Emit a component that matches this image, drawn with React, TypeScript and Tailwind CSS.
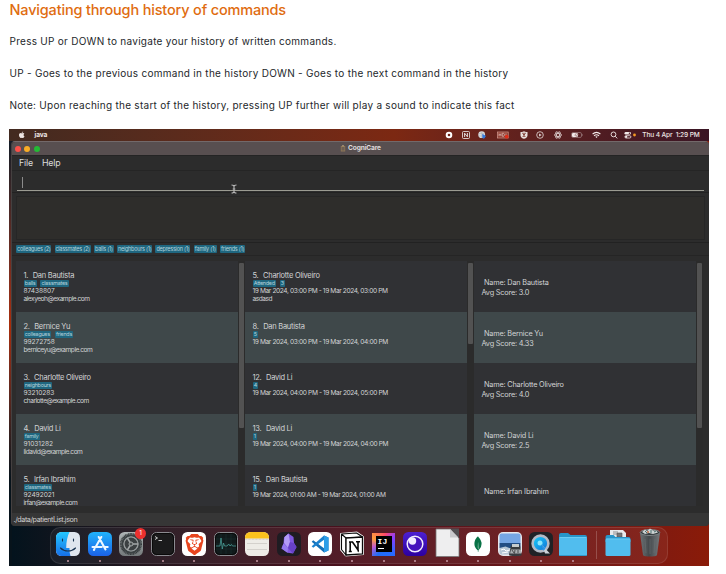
import React from "react";
import { SiBrave, SiMongodb } from "react-icons/si";
import { FaApple } from "react-icons/fa";

type Person = { no: string; name: string; tags: string[]; lines: string[] };
type Score = { name: string; score?: string };

const tagCounts = [
  { label: "colleagues (2)", w: "w-[35px]" },
  { label: "classmates (2)", w: "w-[36px]" },
  { label: "balls (1)", w: "w-[20px]" },
  { label: "neighbours (1)", w: "w-[35px]" },
  { label: "depression (1)", w: "w-[35px]" },
  { label: "family (1)", w: "w-[23px]" },
  { label: "friends (1)", w: "w-[25px]" },
];

const patients: Person[] = [
  { no: "1.", name: "Dan Bautista", tags: ["balls", "classmates"], lines: ["87438807", "alexyeoh@example.com"] },
  { no: "2.", name: "Bernice Yu", tags: ["colleagues", "friends"], lines: ["99272758", "berniceyu@example.com"] },
  { no: "3.", name: "Charlotte Oliveiro", tags: ["neighbours"], lines: ["93210283", "charlotte@example.com"] },
  { no: "4.", name: "David Li", tags: ["family"], lines: ["91031282", "lidavid@example.com"] },
  { no: "5.", name: "Irfan Ibrahim", tags: ["classmates"], lines: ["92492021", "irfan@example.com"] },
];

const appointments: Person[] = [
  { no: "5.", name: "Charlotte Oliveiro", tags: ["Attended", "3"], lines: ["19 Mar 2024, 03:00 PM - 19 Mar 2024, 03:00 PM", "asdasd"] },
  { no: "8.", name: "Dan Bautista", tags: ["5"], lines: ["19 Mar 2024, 03:00 PM - 19 Mar 2024, 04:00 PM"] },
  { no: "12.", name: "David Li", tags: ["4"], lines: ["19 Mar 2024, 04:00 PM - 19 Mar 2024, 05:00 PM"] },
  { no: "13.", name: "David Li", tags: ["1"], lines: ["19 Mar 2024, 04:00 PM - 19 Mar 2024, 04:00 PM"] },
  { no: "15.", name: "Dan Bautista", tags: ["1"], lines: ["19 Mar 2024, 01:00 AM - 19 Mar 2024, 01:00 AM"] },
];

const scores: Score[] = [
  { name: "Dan Bautista", score: "3.0" },
  { name: "Bernice Yu", score: "4.33" },
  { name: "Charlotte Oliveiro", score: "4.0" },
  { name: "David Li", score: "2.5" },
  { name: "Irfan Ibrahim" },
];

const rowBg = (i: number) => (i % 2 ? "bg-[#3f484a]" : "bg-[#303134]");

const lineTracking = (line: string) => {
  if (/^\d+$/.test(line)) return "tracking-[-0.05px]";
  if (line.includes(":")) return "tracking-[-0.39px]";
  return "tracking-[-0.49px]";
};

function PersonList({ items }: { items: Person[] }) {
  return (
    <div className="h-[245px] w-[222px] shrink-0 overflow-hidden">
      {items.map((p, i) => (
        <div key={i} className={`h-[51px] pt-[9px] pl-[7.5px] text-[#d2d4d5] ${rowBg(i)}`}>
          <div className="flex h-[9.5px] gap-[4.5px] text-[7.5px] leading-[11px] tracking-[-0.26px]">
            <span>{p.no}</span>
            <span>{p.name}</span>
          </div>
          <div className="flex h-[9.3px] gap-[3.5px]">
            {p.tags.map((t) => (
              <span key={t} className="h-[7.5px] rounded-[1px] bg-[#1f6780] px-[1.3px] text-[5.4px] leading-[7.5px] tracking-[-0.26px] text-[#b4d3dc]">
                {t}
              </span>
            ))}
          </div>
          {p.lines.map((l) => (
            <div key={l} className={`mb-[3.2px] h-[5px] text-[6.6px] leading-[5px] whitespace-nowrap ${lineTracking(l)}`}>{l}</div>
          ))}
        </div>
      ))}
    </div>
  );
}

function ScoreList() {
  return (
    <div className="h-[245px] w-[222px] shrink-0 overflow-hidden">
      {scores.map((s, i) => (
        <div key={i} className={`flex h-[51px] flex-col justify-center pt-[2px] pl-[7.5px] text-[7.3px] leading-[9.8px] tracking-[-0.18px] text-[#d2d4d5] ${rowBg(i)}`}>
          <div className="pl-[2.5px]">Name: {s.name}</div>
          {s.score && <div>Avg Score: {s.score}</div>}
        </div>
      ))}
    </div>
  );
}

function Scroll({ thumb }: { thumb: string }) {
  return (
    <div className="h-[245px] w-[7px] shrink-0 bg-[#2b2b2b] pt-[2px] pl-[1px]">
      <div className={`w-[5px] rounded-[1px] bg-[#525252] ${thumb}`} />
    </div>
  );
}

function MenuBar() {
  return (
    <div className="flex h-[12px] items-center bg-linear-to-r from-[#422a20] via-[#7c2812] via-55% to-[#3a1524] pl-[9px] font-medium text-[#eee6e4]">
      <FaApple className="h-[7.5px] w-[7.5px]" />
      <span className="ml-[9px] w-[410px] text-[6.6px] leading-[12px] font-bold tracking-[-0.1px]">java</span>
      <svg className="h-[8px] w-[8px]" viewBox="0 0 8 8"><circle cx="4" cy="4" r="2.3" fill="none" stroke="#fff" strokeWidth="2" /></svg>
      <svg className="ml-[9px] h-[8px] w-[8px]" viewBox="0 0 8 8">
        <rect x=".5" y=".5" width="7" height="7" rx="1" fill="none" stroke="#eee" strokeWidth=".8" />
        <path d="M2.6 6V2.2L5.4 5.8V2" fill="none" stroke="#eee" strokeWidth=".9" />
      </svg>
      <svg className="ml-[8.5px] h-[8px] w-[8px]" viewBox="0 0 8 8">
        <circle cx="3.7" cy="3.7" r="3.4" fill="#d8dadd" /><path d="M3.7.3v6.8M.8 2.4h5.8M.8 5h4" stroke="#aaa" strokeWidth=".5" />
        <path d="M4.3 2.7L8 5 6 7.7 4.3 7z" fill="#3478dc" />
      </svg>
      <svg className="ml-[10.5px] h-[8px] w-[12px]" viewBox="0 0 12 8">
        <rect x=".4" y="1" width="10.8" height="6" fill="#8c382d" stroke="#d39b90" strokeWidth=".7" />
        <path d="M2 2.3v3M4 2.3v3M2 3.8h2M5.3 2.3v3h1.5l.7-1.5-.7-1.5zM9 2.3v3" fill="none" stroke="#e5c4bd" strokeWidth=".7" />
        <circle cx="9.7" cy="5.7" r="1.9" fill="#df2c18" />
      </svg>
      <svg className="ml-[11px] h-[8px] w-[8px]" viewBox="0 0 8 8">
        <path d="M.5 1C3 1 3 .2 4 .2S5 1 7.5 1v3.5C7.5 6.2 5.5 7.6 4 7.8 2.5 7.6.5 6.2.5 4.5z" fill="#e8dedc" />
        <path d="M2 2.3h4M2.5 5.5h3" stroke="#7b3429" strokeWidth=".7" /><circle cx="4" cy="3.8" r="1" fill="#7b3429" />
      </svg>
      <svg className="ml-[8.5px] h-[8px] w-[8px]" viewBox="0 0 8 8"><circle cx="4" cy="4" r="3.3" fill="none" stroke="#e8dedc" strokeWidth=".8" /><path d="M3.1 2.5v3l2.5-1.5z" fill="#e8dedc" /></svg>
      <svg className="ml-[9.5px] h-[8px] w-[8px]" viewBox="0 0 8 8" fill="none" stroke="#e8dedc" strokeWidth=".7">
        <ellipse cx="4" cy="4" rx="3.7" ry="1.5" /><ellipse cx="4" cy="4" rx="3.7" ry="1.5" transform="rotate(60 4 4)" /><ellipse cx="4" cy="4" rx="3.7" ry="1.5" transform="rotate(120 4 4)" />
      </svg>
      <svg className="ml-[9.5px] h-[8px] w-[12px]" viewBox="0 0 12 8">
        <rect x=".5" y="1.5" width="10" height="5" rx="1.5" fill="none" stroke="#a98f90" strokeWidth=".6" /><rect x="1" y="2" width="6" height="4" rx="1" fill="#f1e8e8" />
        <path d="M6.3.8L3.8 4.3h1.7L4.9 7.3l2.7-3.7H6z" fill="#fff" stroke="#632022" strokeWidth=".4" /><path d="M11.2 3.2v1.6" stroke="#a98f90" strokeWidth=".7" />
      </svg>
      <svg className="ml-[9px] h-[8px] w-[9px]" viewBox="0 0 9 8" fill="none" stroke="#f3eaea" strokeWidth="1.1">
        <path d="M.6 3Q4.5-.3 8.4 3M2 4.7q2.5-2 5 0" /><path d="M3.3 5.7Q4.5 4.8 5.7 5.7L4.5 7z" fill="#f3eaea" stroke="none" />
      </svg>
      <svg className="ml-[8.5px] h-[8px] w-[8px]" viewBox="0 0 8 8" fill="none" stroke="#f3eaea" strokeWidth=".9"><circle cx="3.5" cy="3.4" r="2.4" /><path d="M5.2 5.2L7.2 7.4" /></svg>
      <svg className="ml-[6px] h-[8px] w-[12px]" viewBox="0 0 12 8">
        <rect x=".5" y="1" width="6.5" height="2.6" rx="1.3" fill="#f3eaea" /><circle cx="5.5" cy="2.3" r=".8" fill="#532028" />
        <rect x=".9" y="4.7" width="6" height="2.3" rx="1.15" fill="none" stroke="#f3eaea" strokeWidth=".8" /><circle cx="2.2" cy="5.8" r="1.1" fill="#f3eaea" />
        <circle cx="10.5" cy="4" r="1.4" fill="#f59a24" />
      </svg>
      <span className="ml-[6.8px] text-[6.6px] leading-[12px] tracking-[-0.14px] whitespace-pre">Thu 4 Apr  1:29 PM</span>
    </div>
  );
}

function CareWindow() {
  return (
    <div className="flex h-[385px] flex-col overflow-hidden rounded-[4px] border-t border-l border-t-[#73696a] border-l-[#454040] bg-[#2c2c2c]">
      <div className="flex h-[13px] items-center bg-[#584f50] pl-[2.5px]">
        <div className="flex w-[325px] gap-[3.7px]">
          <span className="h-[6px] w-[6px] rounded-full bg-[#fc5049]" />
          <span className="h-[6px] w-[6px] rounded-full bg-[#f9ad26]" />
          <span className="h-[6px] w-[6px] rounded-full bg-[#24ba35]" />
        </div>
        <svg className="h-[7px] w-[6px]" viewBox="0 0 6 7"><rect x=".8" y="1" width="4.4" height="5.5" fill="#8d7656" /><rect x="1.6" y="2" width="2.8" height="3.5" fill="#6d5e52" /><rect x="2" y=".3" width="2" height="1" fill="#b8a27c" /></svg>
        <span className="ml-[2.5px] text-[6.6px] leading-[13px] font-bold tracking-[-0.14px] text-[#dfdbdb]">CogniCare</span>
      </div>
      <div className="flex h-[16px] shrink-0 items-center gap-[9px] border-t border-b border-t-[#242424] border-b-[#252525] pl-[7px] text-[8.8px] leading-[14px] tracking-[-0.16px] text-[#dcdcdc]">
        <span>File</span><span>Help</span>
      </div>
      <div className="h-[22px] shrink-0 border-b border-[#222] px-[5px] pt-[2px]">
        <div className="h-[18px] border-b border-[#9b9b92] pt-[3.5px] pl-[5px]"><div className="h-[11px] w-px bg-[#8b8b8b]" /></div>
      </div>
      <div className="h-[50px] shrink-0 border-b border-[#222] px-[4px] pt-[2.5px]">
        <div className="h-[44px] border border-[#262626] bg-[#2e2d2b]" />
      </div>
      <div className="flex h-[13px] shrink-0 gap-[3.3px] border-b border-[#252525] pt-[2px] pl-[4.3px]">
        {tagCounts.map((t) => (
          <span key={t.label} className={`h-[8px] rounded-[1px] bg-[#1f6780] text-center text-[5.5px] leading-[8px] tracking-[-0.26px] whitespace-nowrap text-[#b4d3dc] ${t.w}`}>{t.label}</span>
        ))}
      </div>
      <div className="flex h-[257px] shrink-0 pt-[5px] pl-[4px]">
        <PersonList items={patients} />
        <Scroll thumb="h-[165px]" />
        <PersonList items={appointments} />
        <Scroll thumb="h-[81px]" />
        <ScoreList />
        <Scroll thumb="h-[165px]" />
      </div>
      <div className="flex-1 bg-[#363636] pl-[1.5px] text-[7.2px] leading-[14px] tracking-[-0.43px] text-[#d0d0d0]">./data/patientList.json</div>
    </div>
  );
}

function Slot({ children, dot = true, w = "w-[31.57px]" }: { children: React.ReactNode; dot?: boolean; w?: string }) {
  return (
    <div className={`flex shrink-0 flex-col items-center pt-[3px] ${w}`}>
      {children}
      <span className={`mt-[3px] h-[2px] w-[2px] rounded-full ${dot ? "bg-[#c79aa5]" : ""}`} />
    </div>
  );
}

function Svg({ children, wide }: { children: React.ReactNode; wide?: boolean }) {
  return wide ? (
    <svg className="h-[26px] w-[28px]" viewBox="0 0 28 26">{children}</svg>
  ) : (
    <svg className="h-[26px] w-[26px]" viewBox="0 0 26 26">{children}</svg>
  );
}

function Dock() {
  return (
    <div className="relative ml-[41px] flex h-[37px] w-[618px] rounded-[10px] border border-white/10 bg-white/5 pl-[1.2px]">
      <Slot>
        <Svg>
          <defs><linearGradient id="fa" x2="0" y2="1"><stop stopColor="#24c7ff" /><stop offset="1" stopColor="#1670e8" /></linearGradient></defs>
          <rect x="1" y="1" width="24" height="24" rx="5.5" fill="#dfe6ee" />
          <path d="M14.5 1H6.5A5.5 5.5 0 0 0 1 6.5v13A5.5 5.5 0 0 0 6.5 25h9c-.8-2.5-1-5-1-8h-3.3C11.2 11 12.5 5 14.5 1z" fill="url(#fa)" />
          <path d="M7.5 8v2M18.5 8v2M5.5 17c4 4 11 4 15 0" fill="none" stroke="#17324f" strokeWidth="1.1" strokeLinecap="round" />
        </Svg>
      </Slot>
      <Slot>
        <Svg>
          <defs><linearGradient id="as" x2="0" y2="1"><stop stopColor="#20b3fb" /><stop offset="1" stopColor="#1b62e8" /></linearGradient></defs>
          <rect x="1" y="1" width="24" height="24" rx="5.5" fill="url(#as)" />
          <path d="M14.3 6L8.5 16.2M11.7 6l6.8 12.4M5.5 16h9.2M18 16h2.7M7.4 18l-.5.9" stroke="#eef7ff" strokeWidth="2.1" strokeLinecap="round" />
        </Svg>
      </Slot>
      <Slot dot={false}>
        <Svg>
          <defs><linearGradient id="se" x2="0" y2="1"><stop stopColor="#aeb4b5" /><stop offset="1" stopColor="#74797b" /></linearGradient></defs>
          <rect x="1" y="1" width="24" height="24" rx="5.5" fill="url(#se)" />
          <circle cx="13" cy="13" r="10.2" fill="none" stroke="#33383a" strokeWidth="1.6" strokeDasharray="1.1 .5" />
          <circle cx="13" cy="13" r="8.6" fill="none" stroke="#3b4143" strokeWidth="2.2" />
          <circle cx="13" cy="13" r="7" fill="#3b4042" stroke="#969b9c" strokeWidth="1.2" />
          <path d="M13 13h7M13 13L9.4 7M13 13L9.4 19" stroke="#a2a7a8" strokeWidth="1.5" /><circle cx="13" cy="13" r="2" fill="#4b5051" stroke="#a2a7a8" />
        </Svg>
      </Slot>
      <Slot>
        <Svg><rect x="1.5" y="1.5" width="23" height="23" rx="5" fill="#1b1b1c" stroke="#8b8b90" /><rect x="2.5" y="2.5" width="21" height="21" rx="4" fill="none" stroke="#090909" /><path d="M5 5.5l2.5 1.5L5 8.5M8.5 9.5h3.5" fill="none" stroke="#ddd" strokeWidth=".9" /></Svg>
      </Slot>
      <Slot>
        <div className="flex h-[26px] w-[26px] items-center justify-center"><div className="flex h-[24px] w-[24px] items-center justify-center rounded-[5.5px] bg-white"><SiBrave className="h-[21px] w-[21px] text-[#e8451f]" /></div></div>
      </Slot>
      <Slot dot={false}>
        <Svg>
          <rect x="1.5" y="1.5" width="23" height="23" rx="5" fill="#111a1b" stroke="#8b8b90" /><rect x="2.5" y="2.5" width="21" height="21" rx="4" fill="none" stroke="#090909" />
          <path d="M3 8h20M3 13h20M3 18h20M8 3v20M13 3v20M18 3v20" stroke="#1e3536" strokeWidth=".5" />
          <path d="M3 15h4l1-8 1.3 11L10.5 12l1 3h2.7l1.5-2 1.3 2 1.5-1.5 1 1.5H23" fill="none" stroke="#479a94" strokeWidth=".8" />
        </Svg>
      </Slot>
      <Slot>
        <Svg>
          <rect x="1" y="1" width="24" height="24" rx="5.5" fill="#eeece7" /><path d="M1 7.5v-1A5.5 5.5 0 0 1 6.5 1h13A5.5 5.5 0 0 1 25 6.5v1z" fill="#fbc21c" />
          <path d="M1 8.3h24" stroke="#aaa" strokeWidth=".6" strokeDasharray=".7 .7" /><path d="M3 12.5h20M3 18.5h20" stroke="#c9c6c0" strokeWidth=".7" />
        </Svg>
      </Slot>
      <Slot>
        <Svg>
          <rect x="1" y="1" width="24" height="24" rx="5.5" fill="#1e1c22" />
          <path d="M12.5 2.5l5 3.5.5 6 2.5 4-3.5 6.5-5.5-.8-6-4.2 2-5 .5-6z" fill="#7f57df" />
          <path d="M12.5 2.5L14 11l-2 6-4-5.3.5-5.7z" fill="#b29af5" /><path d="M5.5 17.5l2-5L12 17l-.5 4.7z" fill="#9478ee" /><path d="M14 11l4 1 2.5 4-3.5 6.5L12 17z" fill="#6741c7" />
        </Svg>
      </Slot>
      <Slot>
        <Svg>
          <rect x="1" y="1" width="24" height="24" rx="5.5" fill="#fff" />
          <path d="M17 4.5L21.5 6.5v13L17 21.5 4.7 10.8l1.5-1.5L17 17.3z" fill="#1470b8" /><path d="M17 4.5L4.7 15.2l1.5 1.5L17 8.7z" fill="#1b82cf" /><path d="M17 4.5l4.5 2v13l-4.5 2z" fill="#2d9ee8" />
        </Svg>
      </Slot>
      <Slot>
        <Svg>
          <path d="M1.5 2.5L18 1l6.5 4.5v18L6.5 25 1.5 19z" fill="#fff" stroke="#eee" strokeLinejoin="round" />
          <path d="M2.5 3L17.5 2l6 4-16.5 1zM2.5 3v15.5L7 24V7z" fill="#fff" stroke="#0b0b0b" strokeWidth="1.1" strokeLinejoin="round" /><path d="M7 7l16.5-1v17L7 24z" fill="#fff" stroke="#0b0b0b" strokeWidth="1.3" />
          <path d="M10 11h3.5l5.5 8V11.5M11.2 11v9.5M9.8 20.5h3M17 10.8h4M19.2 19v1.5" fill="none" stroke="#080808" strokeWidth="1.6" />
        </Svg>
      </Slot>
      <Slot>
        <div className="h-[26px] w-[26px] p-[1.5px]">
          <div className="h-[23px] w-[23px] bg-[conic-gradient(from_300deg,#ff9d3b,#ff466d_20%,#8a3cff_32%,#246bff_55%,#1f6df5_75%,#c05ad0_88%,#ff9d3b)] p-[3.5px]">
            <div className="flex h-[16px] w-[16px] flex-col bg-black pt-[1.5px] pl-[2px] font-['Liberation_Mono'] text-[8px] leading-[8px] font-bold text-white">IJ<span className="mt-[2.5px] h-[1.2px] w-[6px] bg-white" /></div>
          </div>
        </div>
      </Slot>
      <Slot>
        <Svg>
          <defs><linearGradient id="ins" x2="0" y2="1"><stop stopColor="#4d20d0" /><stop offset="1" stopColor="#2c00a0" /></linearGradient></defs>
          <rect x="1" y="1" width="24" height="24" rx="5.5" fill="url(#ins)" /><circle cx="13" cy="13" r="7.8" fill="#4513bd" stroke="#f2edff" strokeWidth="1.5" /><circle cx="10.5" cy="10" r="3.7" fill="#f2edff" />
        </Svg>
      </Slot>
      <Slot>
        <svg className="-mt-[3px] h-[29px] w-[26px]" viewBox="0 -3 26 29"><path d="M2-2h14.5L25 7v18.5H2z" fill="#eeeeef" stroke="#777" strokeWidth=".8" /><path d="M16-2.5h9V7.5z" fill="#524f52" /><path d="M16-2v8.5h8.5z" fill="#c9c9cc" /></svg>
      </Slot>
      <Slot>
        <div className="flex h-[26px] w-[26px] items-center justify-center"><div className="flex h-[24px] w-[24px] items-center justify-center rounded-[5.5px] bg-white"><SiMongodb className="h-[16px] w-[16px] text-[#087246]" /></div></div>
      </Slot>
      <Slot>
        <Svg>
          <rect x="1" y="1" width="24" height="24" rx="5" fill="#e8e7eb" /><path d="M2.5 4.5a2 2 0 0 1 2-2h17a2 2 0 0 1 2 2V12h-21z" fill="#75a6e4" /><path d="M2.5 12h21v5h-21z" fill="#224d83" /><path d="M2.5 17l6-1.5 5 2 10-1v5a2 2 0 0 1-2 2h-17a2 2 0 0 1-2-2z" fill="#b6c6d5" />
          <path d="M4 19l3-1 2 2 4-1M5 22l6-1" stroke="#fff" fill="none" /><path d="M14 14.5h9l1.7 9.5c0 1.5-12.7 1.5-12.7 0z" fill="#383b3e" /><path d="M15 13h7v3h-7z" fill="#c7cccd" /><path d="M14 18.5h10v4H13z" fill="#abb0b2" /><path d="M15 19l2 3m1-3l-.5 3.5M21 19v3" stroke="#222" strokeWidth=".7" />
        </Svg>
      </Slot>
      <Slot>
        <Svg>
          <defs><linearGradient id="qt" x2="1" y2="1"><stop stopColor="#16d5fb" /><stop offset="1" stopColor="#126bd5" /></linearGradient></defs>
          <rect x="1" y="1" width="24" height="24" rx="5.5" fill="#202226" /><circle cx="12.5" cy="12.5" r="7.9" fill="url(#qt)" stroke="#b3bac5" strokeWidth="2.6" /><circle cx="12" cy="12" r="2.5" fill="#88e6ff" /><path d="M14 14l8 8.5h-5z" fill="#cbd1d8" /><path d="M13 13l4.5 4.7-2 2z" fill="#2894e7" />
        </Svg>
      </Slot>
      <Slot>
        <Svg wide><path d="M0 4q0-2 2-2h7l2.5 2H26q2 0 2 2v3H0z" fill="#2795c9" /><rect y="6" width="28" height="19" rx="1.5" fill="#51bdee" /><path d="M.5 6.5h27" stroke="#77d2f7" strokeWidth=".7" /><path d="M0 24.5h28" stroke="#2b91c3" strokeWidth=".8" /></Svg>
      </Slot>
      <div className="flex w-[15px] shrink-0 justify-center pt-[3px]"><span className="h-[28px] w-px bg-white/20" /></div>
      <Slot dot={false} w="w-[29px]">
        <svg className="-mt-[3px] h-[29px] w-[26px]" viewBox="0 -3 26 29">
          <path d="M5-1h13l3 3v8H5z" fill="#e9eaeb" /><path d="M8 1h5M8 3h4M12 2h5v4h-5z" stroke="#555" fill="#777" strokeWidth=".6" />
          <path d="M.5 6q0-2 2-2h6l2 2H23.5q2 0 2 2v3H.5z" fill="#2795c9" /><rect x=".5" y="7.5" width="25" height="17.5" rx="1.5" fill="#51bdee" /><path d="M1 8h24" stroke="#77d2f7" strokeWidth=".7" />
        </svg>
      </Slot>
      <Slot dot={false} w="w-[34px]">
        <svg className="-mt-[3px] h-[29px] w-[22px]" viewBox="0 -3 22 29">
          <defs><linearGradient id="tr"><stop stopColor="#6d7275" /><stop offset=".45" stopColor="#44494c" /><stop offset="1" stopColor="#75797c" /></linearGradient></defs>
          <path d="M1 2h20l-3 22c-.3 2-13.7 2-14 0z" fill="url(#tr)" /><ellipse cx="11" cy="1.5" rx="9.8" ry="3" fill="#33393b" stroke="#7c8285" />
          <path d="M3 1l3-2.5 2 1.5 3-2.5 3 2 3 0L19 1.5l-5 1.5-4-1-4 1z" fill="#cdd3d3" /><path d="M6 0l2 2M12-1v3M15 1l2-1" stroke="#4a6f6e" /><circle cx="9" cy="1" r="1" fill="#bf6b45" />
          <path d="M6 8l1 14M11 8v15M16 8l-1 14" stroke="#6c7275" strokeWidth=".5" />
        </svg>
      </Slot>
      <span className="absolute top-0 left-[84px] flex h-[11px] w-[11px] items-center justify-center rounded-full bg-[#ed302f] text-[6.5px] leading-none text-white">1</span>
    </div>
  );
}

export default function App() {
  return (
    <div className="h-[574px] w-[726px] overflow-hidden bg-white font-[Inter,sans-serif]">
      <div className="h-[129px] pl-[9.5px] text-[#24272b]">
        <h1 className="h-[25px] pt-[1px] text-[14.5px] leading-[18px] font-medium tracking-[-0.17px] text-[#e06c10]">Navigating through history of commands</h1>
        <p className="h-[32px] pt-[8px] text-[10px] leading-[16px] tracking-[0.27px]">Press UP or DOWN to navigate your history of written commands.</p>
        <p className="h-[32px] pt-[8px] text-[10px] leading-[16px] tracking-[0.28px]">UP - Goes to the previous command in the history DOWN - Goes to the next command in the history</p>
        <p className="h-[32px] pt-[8px] text-[10px] leading-[16px] tracking-[0.27px]">Note: Upon reaching the start of the history, pressing UP further will play a sound to indicate this fact</p>
      </div>
      <div className="relative ml-[9px] h-[437px] w-[700px] overflow-hidden bg-linear-to-r from-[#03131d] via-[#47101d] via-45% to-[#8a1b08]">
        <div className="absolute inset-y-0 left-0 w-[3px] bg-linear-to-b from-[#071925] via-[#a92d08] via-45% to-[#07131b] to-80%" />
        <div className="relative">
          <MenuBar />
          <div className="pl-[2px]"><CareWindow /></div>
          <div className="pt-px"><Dock /></div>
        </div>
        <svg className="absolute top-[55px] left-[221px] h-[10px] w-[8px]" viewBox="0 0 8 10"><path d="M1.5 1Q4 1 4 2.5 4 1 6.5 1M4 2v6M1.5 9Q4 9 4 7.5 4 9 6.5 9M2.7 5h2.6" fill="none" stroke="#b9b9b9" strokeWidth="1.1" /></svg>
      </div>
    </div>
  );
}
